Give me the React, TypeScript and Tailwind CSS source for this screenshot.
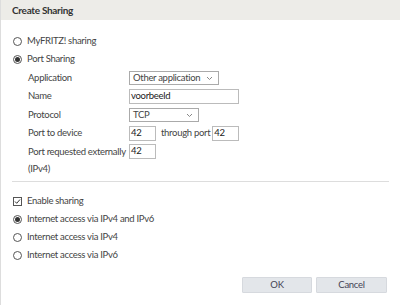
import React, { useState } from 'react';

const Radio = ({ checked }: { checked?: boolean }) => (
    <span className="w-[9px] h-[9px] rounded-full border border-[#555] bg-white flex items-center justify-center shrink-0">
        {checked && <span className="w-[5px] h-[5px] rounded-full bg-[#333]" />}
    </span>
);

const Chevron = () => (
    <svg width="7" height="5" viewBox="0 0 7 5" className="shrink-0">
        <path d="M1 1l2.5 2.5L6 1" fill="none" stroke="#888" strokeWidth="1" />
    </svg>
);

const App = () => {
    const [access] = useState('both');

    return (
        <div className="w-[400px] h-[305px] bg-white text-[9.5px] tracking-[-0.3px] text-[#444] border-l border-[#ddd] overflow-hidden" style={{ fontFamily: 'Lato, "Open Sans", sans-serif' }}>
            <div className="h-[20px] bg-[#edece8] flex items-center px-[11px] font-bold text-[#333] text-[10px]">
                Create Sharing
            </div>

            <div className="pl-[12px] pr-[11px]">
                <div className="flex items-center gap-[5px] mt-[15px] h-[12px]">
                    <Radio />
                    <span>MyFRITZ! sharing</span>
                </div>
                <div className="flex items-center gap-[5px] mt-[6px] h-[12px]">
                    <Radio checked />
                    <span>Port Sharing</span>
                </div>

                <div className="pl-[15px] mt-[4px] flex flex-col">
                    <div className="flex items-center h-[18px]">
                        <span className="w-[101px]">Application</span>
                        <div className="w-[90px] h-[14px] border border-[#aaa] flex items-center justify-between pl-[3px] pr-[5px] whitespace-nowrap">
                            <span>Other application</span>
                            <Chevron />
                        </div>
                    </div>
                    <div className="flex items-center h-[19px]">
                        <span className="w-[101px]">Name</span>
                        <div className="w-[110px] h-[15px] border border-[#bbb] flex items-center pl-[1px] text-[#222]">
                            voorbeeld
                        </div>
                    </div>
                    <div className="flex items-center h-[18px]">
                        <span className="w-[101px]">Protocol</span>
                        <div className="w-[70px] h-[14px] border border-[#aaa] flex items-center justify-between pl-[3px] pr-[5px]">
                            <span>TCP</span>
                            <Chevron />
                        </div>
                    </div>
                    <div className="flex items-center h-[19px]">
                        <span className="w-[101px]">Port to device</span>
                        <div className="w-[27px] h-[15px] border border-[#bbb] flex items-center pl-[1px] text-[#222]">42</div>
                        <span className="ml-[5px] mr-[2px]">through port</span>
                        <div className="w-[27px] h-[15px] border border-[#bbb] flex items-center pl-[1px] text-[#222]">42</div>
                    </div>
                    <div className="flex items-start">
                        <span className="w-[101px] leading-[17px] whitespace-nowrap">Port requested externally<br />(IPv4)</span>
                        <div className="w-[27px] h-[15px] mt-[1px] border border-[#bbb] flex items-center pl-[1px] text-[#222]">42</div>
                    </div>
                </div>
            </div>

            <div className="mx-[11px] mt-[4px] border-t border-[#ddd]" />

            <div className="pl-[12px]">
                <div className="flex items-center gap-[5px] mt-[13px] h-[12px]">
                    <span className="w-[9px] h-[9px] border border-[#555] flex items-center justify-center shrink-0">
                        <svg width="7" height="7" viewBox="0 0 7 7">
                            <path d="M1 3.5l1.7 1.8L6 1.5" fill="none" stroke="#333" strokeWidth="1" />
                        </svg>
                    </span>
                    <span>Enable sharing</span>
                </div>
                <div className="flex items-center gap-[5px] mt-[6px] h-[12px]">
                    <Radio checked={access === 'both'} />
                    <span>Internet access via IPv4 and IPv6</span>
                </div>
                <div className="flex items-center gap-[5px] mt-[6px] h-[12px]">
                    <Radio checked={access === 'v4'} />
                    <span>Internet access via IPv4</span>
                </div>
                <div className="flex items-center gap-[5px] mt-[6px] h-[12px]">
                    <Radio checked={access === 'v6'} />
                    <span>Internet access via IPv6</span>
                </div>
            </div>

            <div className="flex justify-end gap-[4px] pr-[13px] mt-[16px]">
                <button className="w-[70px] h-[16px] bg-[#e3e6ea] border border-[#d6d9de] text-[#445] rounded-[1px] leading-none">OK</button>
                <button className="w-[71px] h-[16px] bg-[#e3e6ea] border border-[#d6d9de] text-[#445] rounded-[1px] leading-none">Cancel</button>
            </div>
        </div>
    );
};

export default App;
